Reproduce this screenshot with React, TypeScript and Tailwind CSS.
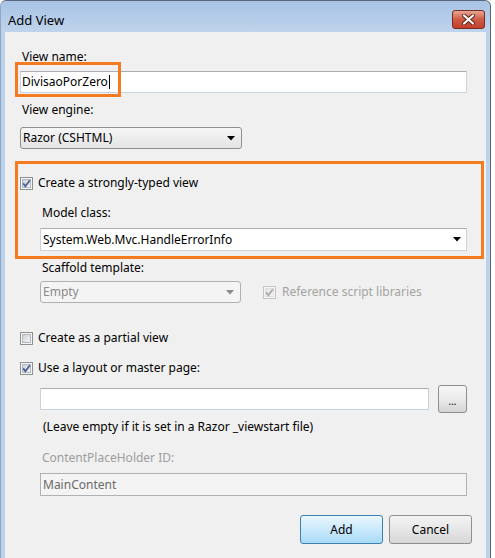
import React from "react";

// Win7 style check box, drawn at 13x13
const CheckBox = ({ checked = false, disabled = false }: { checked?: boolean; disabled?: boolean }) => {
  const id = disabled ? "cbDis" : "cbEn";
  return (
    <svg width="13" height="13" viewBox="0 0 13 13" className="shrink-0">
      <defs>
        <linearGradient id={id} x1="0" y1="0" x2="1" y2="1">
          <stop offset="0" stopColor={disabled ? "#e4e4e4" : "#cbcfd5"} />
          <stop offset="1" stopColor={disabled ? "#f6f6f6" : "#f7f7f7"} />
        </linearGradient>
      </defs>
      <rect x="0.5" y="0.5" width="12" height="12" fill="#f6f6f6" stroke={disabled ? "#c4c4c4" : "#8e8f8f"} />
      <rect x="2.5" y="2.5" width="8" height="8" fill={`url(#${id})`} stroke={disabled ? "#dedede" : "#b3b7bd"} />
      {checked && (
        <path
          d="M3.2 6.4 L5.4 9.2 L9.9 3.3"
          fill="none"
          stroke={disabled ? "#a9a9a9" : "#4a5f97"}
          strokeWidth="1.8"
        />
      )}
    </svg>
  );
};

const Arrow = ({ color = "#000" }: { color?: string }) => (
  <svg width="8" height="5" viewBox="0 0 8 5" className="shrink-0">
    <polygon points="0,0 8,0 4,4.5" fill={color} />
  </svg>
);

const labelStyle = "h-4 leading-4 whitespace-nowrap";

export default function App() {
  return (
    <div className="relative h-[558px] w-[495px] overflow-hidden bg-white font-['Noto_Sans',sans-serif] text-[12px] text-black">
      <div className="flex h-[562px] w-[491px] flex-col rounded-t-[6px] border border-[#5b6678] border-l-[#8fa6c4] bg-[#bcd2eb]">
        {/* title bar */}
        <div className="flex h-[31px] shrink-0 items-start justify-between rounded-t-[6px] bg-gradient-to-b from-[#a7c3e5] to-[#bfd4ec] pl-[7px] pr-[5px]">
          <span className="mt-[11px] text-[13px] leading-4 text-black">Add View</span>
          <div className="mt-[9px] flex h-[19px] w-[33px] items-center justify-center rounded-[3px] border border-[#7a2b20] bg-gradient-to-b from-[#e5a594] via-[#cf5a44] to-[#c2402b]">
            <svg width="13" height="11" viewBox="0 0 13 11">
              <path d="M2 1.5 L11 9.5 M11 1.5 L2 9.5" stroke="#5a2018" strokeWidth="4" strokeLinecap="round" />
              <path d="M2 1.5 L11 9.5 M11 1.5 L2 9.5" stroke="#ffffff" strokeWidth="2.2" strokeLinecap="round" />
            </svg>
          </div>
        </div>

        {/* dialog body */}
        <div className="mx-[4px] flex flex-1 flex-col bg-[#f0f0f0] pl-[15px] pt-[17px]">
          <div className={`${labelStyle} ml-[2px]`}>View name:</div>
          <div className="mt-[6px] flex h-[22px] w-[447px] items-center border border-[#c9d3df] border-t-[#abadb3] bg-white pl-[1px]">
            <span className="leading-4">DivisaoPorZero</span>
            <span className="ml-[1px] h-[14px] w-px bg-black" />
          </div>

          <div className={`${labelStyle} ml-[2px] mt-[9px]`}>View engine:</div>
          <div className="mt-[9px] flex h-[22px] w-[222px] items-center justify-between rounded-[3px] border border-[#8e8f8f] bg-gradient-to-b from-[#f6f6f6] to-[#e4e4e4] pl-[2px] pr-[6px]">
            <span className="leading-4">Razor (CSHTML)</span>
            <Arrow />
          </div>

          <div className="mt-[26px] flex h-4 items-center gap-[5px]">
            <CheckBox checked />
            <span className="leading-4">Create a strongly-typed view</span>
          </div>

          <div className="flex flex-col pl-[20px]">
            <div className={`${labelStyle} ml-[2px] mt-[14px]`}>Model class:</div>
            <div className="mt-[7px] flex h-[23px] w-[427px] items-center justify-between border border-[#c9d3df] border-t-[#abadb3] bg-white pl-[2px] pr-[5px]">
              <span className="leading-4">System.Web.Mvc.HandleErrorInfo</span>
              <Arrow />
            </div>

            <div className={`${labelStyle} ml-[2px] mt-[9px]`}>Scaffold template:</div>
            <div className="mt-[5px] flex h-[22px] items-center">
              <div className="flex h-[22px] w-[201px] items-center justify-between rounded-[3px] border border-[#adb2b5] bg-[#f4f4f4] pl-[2px] pr-[6px]">
                <span className="leading-4 text-[#8a8a8a]">Empty</span>
                <Arrow color="#8a8a8a" />
              </div>
              <div className="ml-[22px] flex items-center gap-[6px]">
                <CheckBox checked disabled />
                <span className="leading-4 text-[#a3a3a3]">Reference script libraries</span>
              </div>
            </div>
          </div>

          <div className="mt-[27px] flex h-4 items-center gap-[5px]">
            <CheckBox />
            <span className="leading-4">Create as a partial view</span>
          </div>
          <div className="mt-[14px] flex h-4 items-center gap-[5px]">
            <CheckBox checked />
            <span className="leading-4">Use a layout or master page:</span>
          </div>

          <div className="flex flex-col pl-[20px]">
            <div className="mt-[9px] flex h-[28px] items-center gap-[9px]">
              <div className="h-[22px] w-[389px] border border-[#c9d3df] border-t-[#abadb3] bg-white" />
              <div className="flex h-[28px] w-[29px] items-end justify-center rounded-[3px] border border-[#8e8f8f] bg-gradient-to-b from-[#f6f6f6] via-[#ebebeb] to-[#d4d4d4] pb-[6px]">
                <span className="text-[10px] leading-[10px]">...</span>
              </div>
            </div>

            <div className={`${labelStyle} ml-[3px] mt-[6px]`}>(Leave empty if it is set in a Razor _viewstart file)</div>
            <div className={`${labelStyle} ml-[2px] mt-[15px] text-[#9d9d9d]`}>ContentPlaceHolder ID:</div>
            <div className="mt-[7px] flex h-[23px] w-[427px] items-center border border-[#adb2b5] bg-[#f4f4f4] pl-[2px]">
              <span className="leading-4 text-[#6a6a6a]">MainContent</span>
            </div>
          </div>

          <div className="mt-[19px] flex justify-end gap-[6px] pr-[14px]">
            <div className="flex h-[29px] w-[83px] items-center justify-center rounded-[3px] border border-[#3c7fb1] bg-gradient-to-b from-[#eaf6fd] via-[#c9e9fc] to-[#a9dbf6]">
              Add
            </div>
            <div className="flex h-[29px] w-[83px] items-center justify-center rounded-[3px] border border-[#8e8f8f] bg-gradient-to-b from-[#f4f4f4] via-[#e6e6e6] to-[#d6d6d6]">
              Cancel
            </div>
          </div>
        </div>
      </div>

      {/* orange annotation boxes drawn over the dialog */}
      <div className="absolute left-[15px] top-[62px] h-[35px] w-[106px] border-[3px] border-[#f47b20]" />
      <div className="absolute left-[15px] top-[161px] h-[98px] w-[469px] border-[3px] border-[#f47b20]" />
    </div>
  );
}
